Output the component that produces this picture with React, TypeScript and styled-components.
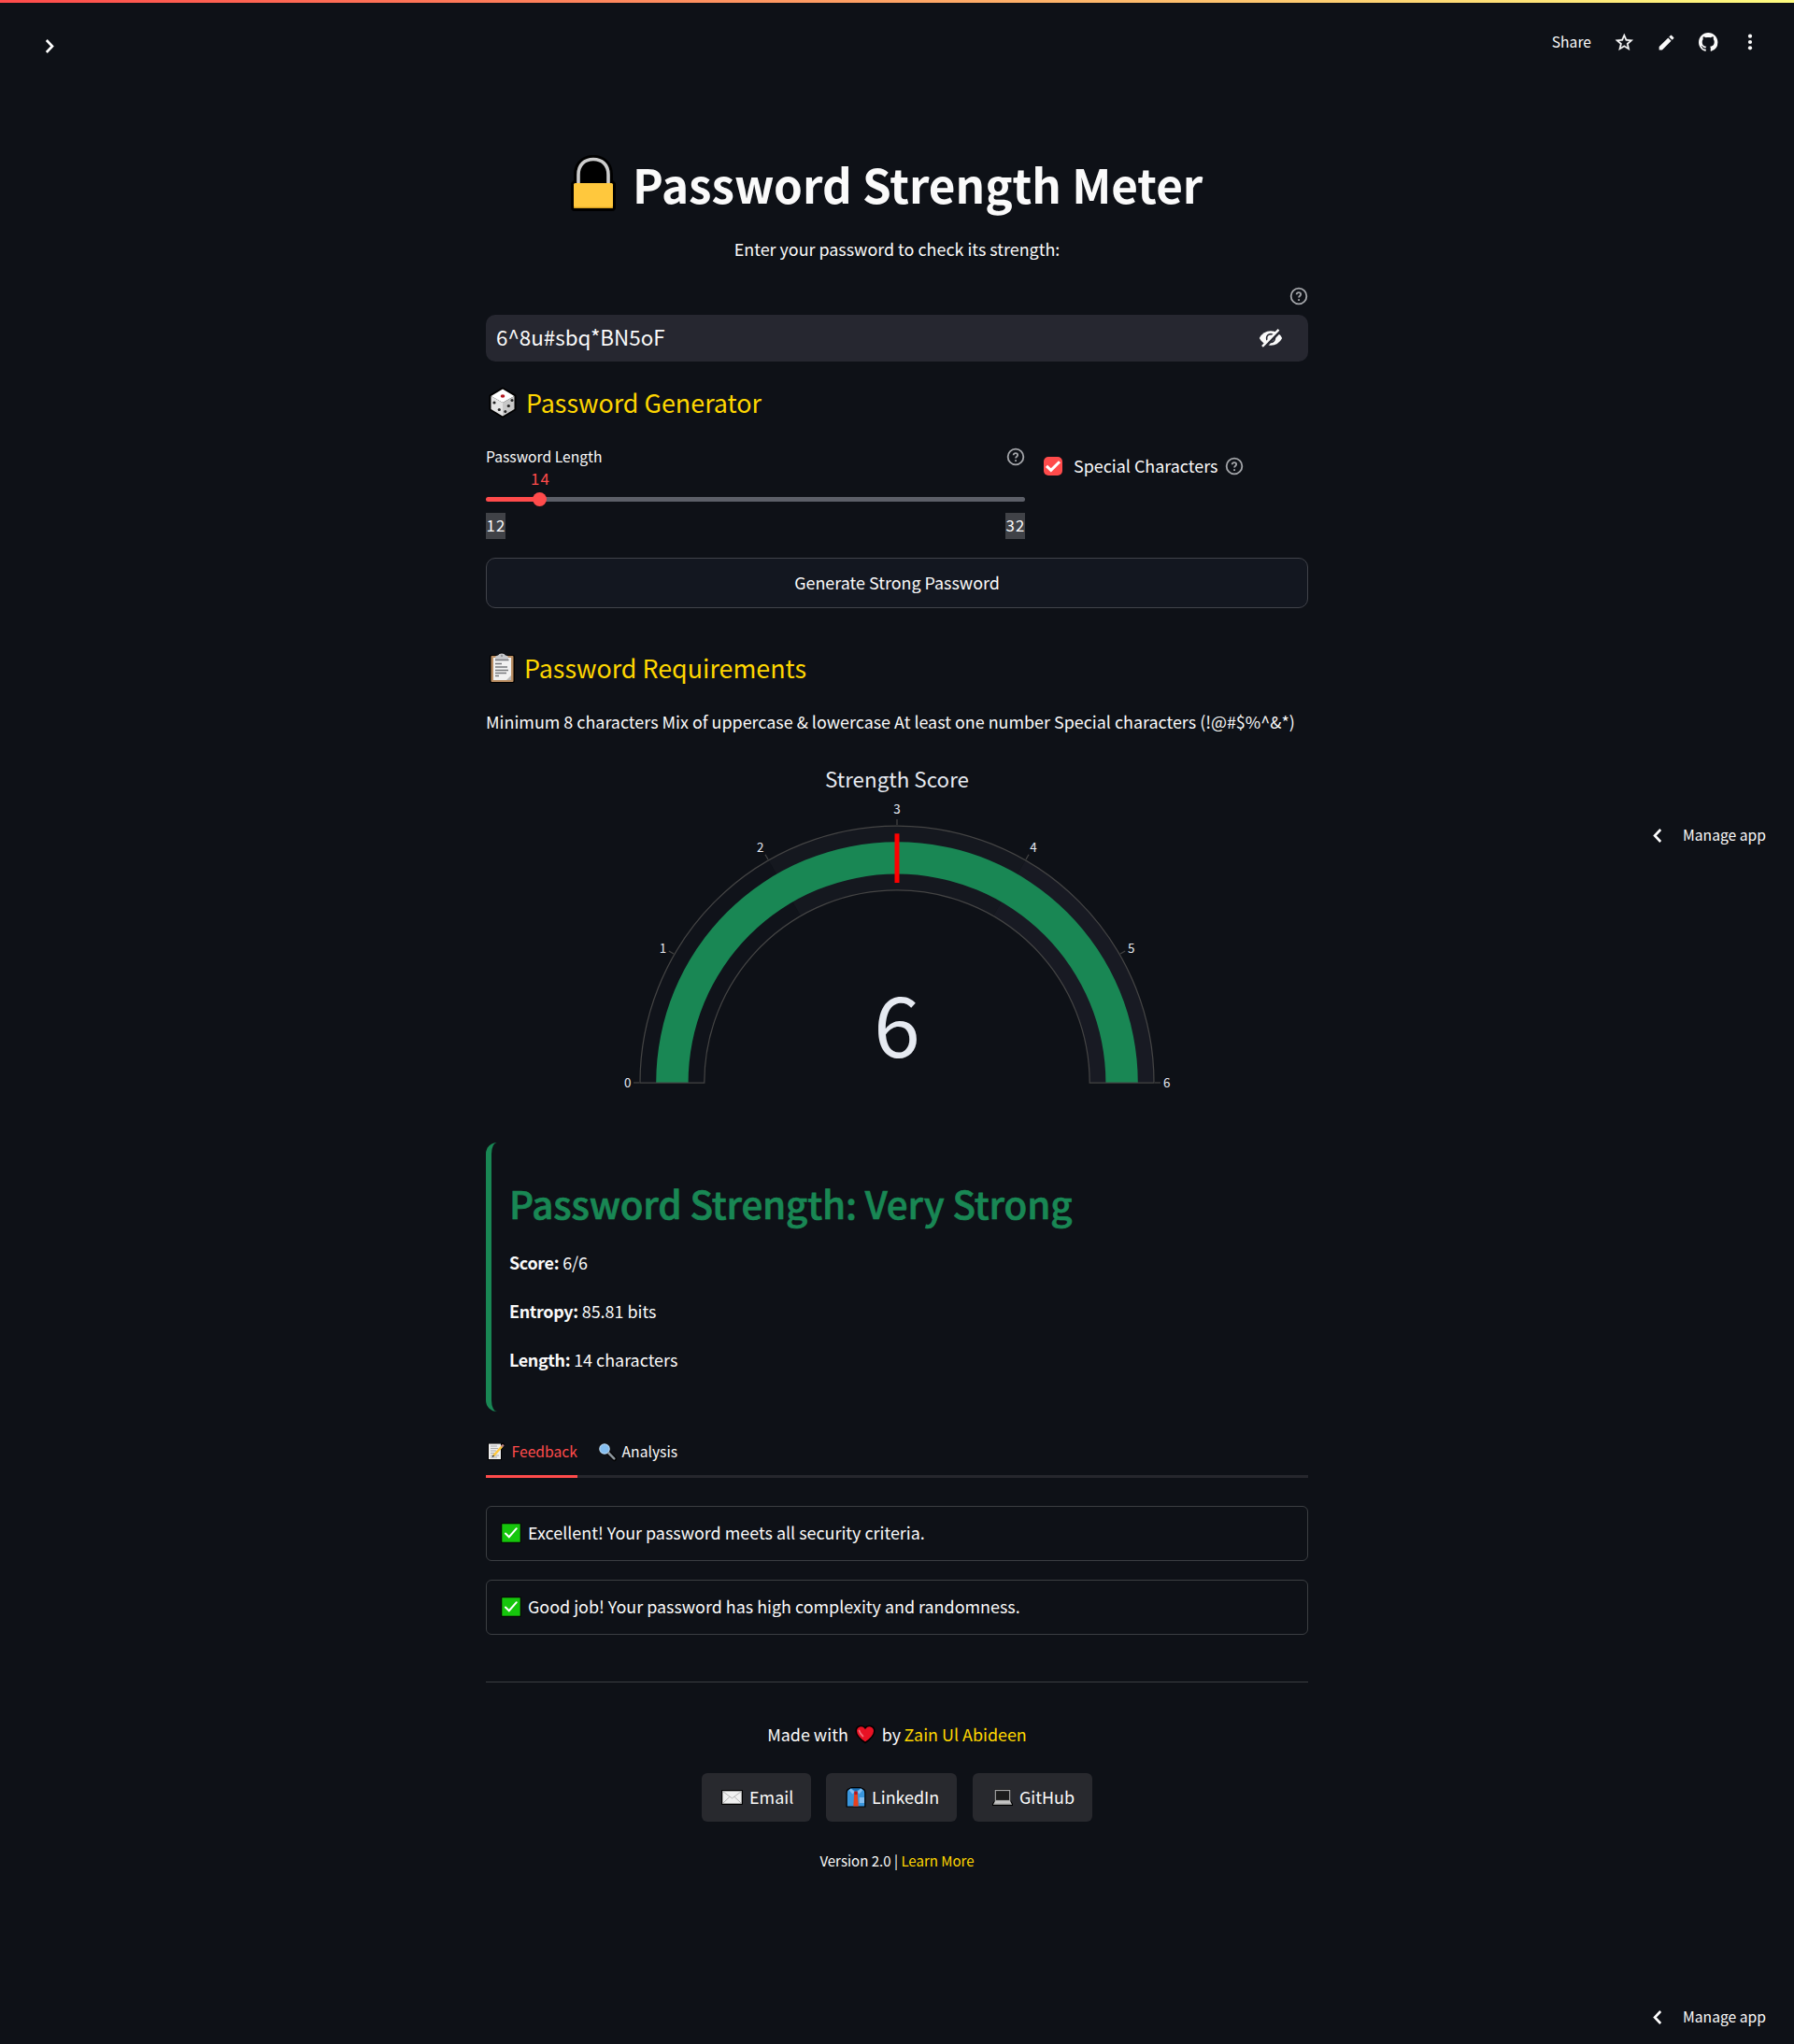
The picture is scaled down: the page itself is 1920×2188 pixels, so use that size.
import React from "react";
import styled, { createGlobalStyle, css } from "styled-components";

const FONT = `"Noto Sans CJK SC", "Noto Sans", sans-serif`;
const TEXT = "#fafafa";
const GOLD = "#ffd700";
const RED = "#ff4b4b";
const GREEN = "#198754";

const GlobalStyle = createGlobalStyle`
  *, *::before, *::after { box-sizing: border-box; }
  body { margin: 0; background: #0e1117; color: ${TEXT}; font-family: ${FONT}; }
  h1, h2, h3, p { margin: 0; font-weight: 400; }
  svg { display: block; flex: none; overflow: visible; }
  a { color: ${GOLD}; text-decoration: none; }
`;

const body = css`
  font-size: 17.91px;
  line-height: 32px;
`;
const small = css`
  font-size: 15.67px;
  line-height: 28px;
`;

const Page = styled.div`
  position: relative;
  height: 2188px;
  overflow: hidden;
  background: #0e1117;
`;
const Decoration = styled.div`
  height: 3px;
  background: linear-gradient(90deg, #ff4b4b, #fffd80);
`;
const Header = styled.header`
  height: 72px;
  display: flex;
  justify-content: space-between;
  padding: 28px 15px 0 42px;
`;
const Expand = styled.div`
  padding-top: 11px;
`;
const Toolbar = styled.div`
  display: flex;
  align-items: center;
  height: 28px;
  ${small}
`;
const Share = styled.span`
  margin-right: 23px;
`;
const ToolIcon = styled.span<{ $w: number }>`
  width: ${(p) => p.$w}px;
  display: flex;
  justify-content: center;
`;

const Main = styled.main`
  width: 880px;
  margin: 0 auto;
  padding-top: 87px;
  display: flex;
  flex-direction: column;
`;
const TitleRow = styled.div`
  display: flex;
  height: 67px;
  padding: 1px 0 0 90px;
  align-items: center;
  gap: 17px;
`;
const Title = styled.h1`
  font-size: 49.35px;
  line-height: 67px;
  font-weight: 700;
  white-space: nowrap;
`;
const Subtitle = styled.p`
  ${body}
  margin-top: 21px;
  text-align: center;
`;
const HelpRow = styled.div`
  display: flex;
  justify-content: flex-end;
  margin-top: 25px;
`;
const InputBox = styled.div`
  display: flex;
  align-items: center;
  justify-content: space-between;
  height: 50px;
  margin-top: 10px;
  padding: 0 27px 0 11px;
  border-radius: 10px;
  background: #262730;
`;
const InputText = styled.span`
  font-size: 22.4px;
  line-height: 32px;
  padding-bottom: 5px;
`;
const Section = styled.div<{ $top: number; $gap: number }>`
  display: flex;
  align-items: center;
  height: 37px;
  margin-top: ${(p) => p.$top}px;
  padding-left: 3px;
  gap: ${(p) => p.$gap}px;
`;
const SectionTitle = styled.h3`
  color: ${GOLD};
  font-size: 26.87px;
  line-height: 37px;
`;
const Columns = styled.div`
  display: grid;
  grid-template-columns: 577px 283px;
  gap: 20px;
  height: 102px;
  margin-top: 26px;
`;
const SliderLabel = styled.div`
  display: flex;
  justify-content: space-between;
  align-items: center;
  ${small}
`;
const digits = css`
  font-size: 16.8px;
  letter-spacing: 1.1px;
`;
const SliderValue = styled.div`
  width: 117px;
  text-align: center;
  color: ${RED};
  height: 17px;
  line-height: 19px;
  ${digits}
`;
const Track = styled.div`
  display: flex;
  align-items: center;
  height: 5px;
  margin: 12px 0;
  border-radius: 4px;
  background: linear-gradient(90deg, ${RED} 10%, #5c5f68 10%);
`;
const Thumb = styled.div`
  width: 15px;
  height: 15px;
  margin-left: 50px;
  border-radius: 50%;
  background: ${RED};
`;
const TickBar = styled.div`
  display: flex;
  justify-content: space-between;
`;
const TickLabel = styled.span`
  width: 21px;
  height: 28px;
  padding-left: 0.5px;
  line-height: 27px;
  background: #404247;
  ${digits}
`;
const CheckRow = styled.div`
  display: flex;
  align-items: center;
  height: 28px;
  margin-top: 10px;
  ${body}
`;
const CheckBox = styled.span`
  width: 20px;
  height: 20px;
  margin-right: 12px;
  border-radius: 5px;
  background: ${RED};
`;
const CheckText = styled.span`
  margin-right: 8px;
  padding-bottom: 2px;
`;
const GenerateButton = styled.button`
  height: 54px;
  margin-top: 20px;
  padding: 0 0 2px;
  border: 1px solid #41434a;
  border-radius: 10px;
  background: #131720;
  color: ${TEXT};
  font-family: ${FONT};
  ${body}
`;
const Paragraph = styled.p`
  ${body}
  margin-top: 23px;
  white-space: nowrap;
`;
const Gauge = styled.svg`
  margin-top: 12px;
  font-family: ${FONT};
`;
const Card = styled.section`
  height: 288px;
  margin-top: 23px;
  padding: 38px 19px 0;
  border-left: 6px solid ${GREEN};
  border-radius: 12px;
`;
const CardTitle = styled.h2`
  color: ${GREEN};
  font-size: 40.3px;
  line-height: 54px;
  font-weight: 500;
  letter-spacing: -0.13px;
  -webkit-text-stroke: 0.7px ${GREEN};
  margin-bottom: 20px;
`;
const Stat = styled.p`
  ${body}
  margin-bottom: 20px;
  b {
    font-weight: 700;
    letter-spacing: -0.33px;
  }
`;
const Tabs = styled.div`
  display: flex;
  gap: 20px;
  height: 53px;
  margin-top: 18px;
  box-shadow: inset 0 -3px 0 #26272d;
`;
const Tab = styled.div<{ $active?: boolean }>`
  display: flex;
  align-items: center;
  padding: 0 0 3px ${(p) => (p.$active ? 1 : 2)}px;
  gap: ${(p) => (p.$active ? 6.6 : 5.6)}px;
  width: ${(p) => (p.$active ? "98px" : "auto")};
  color: ${(p) => (p.$active ? RED : TEXT)};
  box-shadow: ${(p) => (p.$active ? `inset 0 -3px 0 ${RED}` : "none")};
  ${small}
`;
const Alert = styled.div<{ $top: number }>`
  display: flex;
  align-items: center;
  gap: 7px;
  height: 59px;
  margin-top: ${(p) => p.$top}px;
  padding: 0 15px 3px;
  border: 1px solid #3b3e42;
  border-radius: 6px;
  ${body}
  svg { margin-top: 2px; }
`;
const Rule = styled.div`
  height: 1px;
  margin-top: 50px;
  background: #3b3e42;
`;
const Made = styled.div`
  display: flex;
  justify-content: center;
  align-items: center;
  height: 32px;
  margin-top: 39px;
  ${body}
  svg { margin: 0 7px; }
  a { margin-left: 3.5px; }
`;
const Links = styled.div`
  display: flex;
  justify-content: center;
  margin-top: 26px;
`;
const LinkButton = styled.a<{ $w: number; $gap: number; $ml?: number }>`
  display: flex;
  align-items: center;
  width: ${(p) => p.$w}px;
  height: 52px;
  margin-left: ${(p) => p.$ml ?? 0}px;
  padding: 0 0 2px 21px;
  gap: ${(p) => p.$gap}px;
  border-radius: 6px;
  background: #28292e;
  color: ${TEXT};
  ${body}
  svg { margin-top: 1px; }
`;
const Version = styled.p`
  margin-top: 28px;
  text-align: center;
  font-size: 15.04px;
  line-height: 27px;
`;
const Manage = styled.div<{ $top: number }>`
  position: absolute;
  right: 30px;
  top: ${(p) => p.$top}px;
  display: flex;
  align-items: center;
  gap: 23.5px;
  ${small}
`;

const Help = () => (
  <svg width="20" height="20" viewBox="0 0 24 24" fill="none" stroke="#a3a5a9" strokeWidth="2.2" strokeLinejoin="round">
    <circle cx="12" cy="12" r="10" />
    <path d="M9.200 9.800a2.700 2.500 0 0 1 5.400 0c0 1.700-2.500 2.100-2.500 4M12.100 15.800v2.200" />
  </svg>
);
const Chevron = ({ left = false }: { left?: boolean }) => (
  <svg width={left ? 9 : 23} height="15" viewBox={left ? "0 0 9 15" : "-7 0 23 15"} fill="none" stroke="#fff" strokeWidth="2.6">
    <path d={left ? "M8.200 1L2 7.500l6.200 6.500" : "M.8 1L7 7.500.8 14"} />
  </svg>
);

const Lock = () => (
  <svg width="50" height="62" viewBox="0 0 50 62">
    <path d="M4 28V22C4 9 13 1 25 1s21 8 21 21v6l3 3v26q0 4-4 4H5q-4 0-4-4V31z" fill="#000" />
    <path d="M9 33V22C9 11 16 5.500 25 5.500S41 11 41 22v11" fill="none" stroke="#ccc" strokeWidth="3.600" />
    <rect x="4" y="31" width="42" height="27" rx="1.500" fill="#ffc83d" />
    <path d="M4 55v1.500q0 1.500 1.500 1.500h39q1.500 0 1.500-1.500V55q0 1.800-1.500 1.800h-39Q4 56.800 4 55z" fill="#d29a1c" />
  </svg>
);
const Dice = () => (
  <svg width="30" height="34" viewBox="0 0 30 34">
    <path d="M15 1L29 9v15.500L15 33 1 24.500V9z" fill="#000" stroke="#000" strokeLinejoin="round" />
    <path d="M15 2.500L27.500 10 15 17 2.500 10z" fill="#fff" />
    <path d="M2.500 10L15 17v14.500L2.500 24z" fill="#e4e4e4" />
    <path d="M27.500 10L15 17v14.500L27.500 24z" fill="#c8c8c8" />
    <ellipse cx="15" cy="10" rx="2.300" ry="1.700" fill="#b4161f" />
    <g fill="#222">
      <circle cx="6" cy="17" r="1.600" /><circle cx="11.300" cy="24.500" r="1.600" />
      <circle cx="25" cy="14.500" r="1.500" /><circle cx="21.300" cy="20.500" r="1.600" /><circle cx="17.800" cy="26.500" r="1.500" />
    </g>
  </svg>
);
const Clipboard = () => (
  <svg width="29" height="34" viewBox="0 0 29 34">
    <path d="M3 3h7q1-2.500 4-2.500T18 3h8q2 0 2 2v26q0 2-2 2H3q-2 0-2-2V5q0-2 2-2z" fill="#000" />
    <rect x="2.500" y="4" width="24" height="28" rx="1" fill="#b98d62" />
    <path d="M5 6h19v24H5z" fill="#f1f1f1" />
    <path d="M24 25v5h-5z" fill="#b9b9b9" />
    <path d="M7 8.500V6q0-2 3-2.500Q11 1.500 14 1.500t4 2q3 .5 3 2.500v2.500z" fill="#c7c9cd" />
    <path d="M7 8.500h14.500M7 12.500h7M7 16h13M7 19.500h14M7 22.500h12M7 25.500h4" stroke="#77797c" strokeWidth="1.300" />
    <circle cx="14" cy="4" r="1.200" fill="#94969a" />
  </svg>
);
const Memo = () => (
  <svg width="20" height="20" viewBox="0 0 20 20">
    <path d="M1 1h13l4-.500 1 2-3 5V19H1z" fill="#000" />
    <path d="M2 1.500h13V18H2z" fill="#eee" />
    <path d="M4 4h7M4 6.500h8M4 9h6M4 11.500h4M4 14h9M4 16h7" stroke="#aaa" />
    <path d="M7 14.500L16.500 4" stroke="#ffc83d" strokeWidth="2.600" />
    <path d="M15.800 4.700L17.800 2.500" stroke="#c38a8a" strokeWidth="2.400" />
    <path d="M6 15.500l1.500-1.700" stroke="#333" strokeWidth="1.200" />
  </svg>
);
const Magnifier = () => (
  <svg width="20" height="20" viewBox="0 0 20 20">
    <path d="M11 11l6.500 6.500" stroke="#000" strokeWidth="5" strokeLinecap="round" />
    <circle cx="7" cy="7" r="6.800" fill="#111" />
    <circle cx="7" cy="7" r="5.200" fill="#83bdf0" stroke="#b3d4f1" strokeWidth="1.200" />
    <path d="M11.500 11.500l5.800 5.800" stroke="#8d969d" strokeWidth="2.600" strokeLinecap="round" />
  </svg>
);
const Check = () => (
  <svg width="22" height="22" viewBox="0 0 22 22">
    <rect width="22" height="22" rx="1.500" fill="#050a05" />
    <rect x="1.300" y="1.300" width="19.400" height="19.400" fill="#16c60c" />
    <path d="M5 11.500l3.800 3.700 8-9" fill="none" stroke="#fff" strokeWidth="2" strokeLinecap="round" />
  </svg>
);
const Heart = () => (
  <svg width="22" height="21" viewBox="0 0 22 21">
    <path d="M11 19.500C4.500 15 1.200 11.500 1.200 7a5.400 5.400 0 0 1 9.800-3.200A5.400 5.400 0 0 1 20.800 7c0 4.500-3.300 8-9.800 12.500z" fill="#e81224" stroke="#000" strokeWidth="1.600" />
    <path d="M4.500 6.500q1 3.500 4 6" stroke="#f4717d" strokeWidth="1.800" fill="none" strokeLinecap="round" />
  </svg>
);
const Envelope = () => (
  <svg width="23" height="16" viewBox="0 0 23 16">
    <rect width="23" height="16" rx="1" fill="#000" />
    <rect x="1.300" y="1.300" width="20.400" height="13.400" fill="#f0f0f0" />
    <path d="M1.500 1.500l10 7.500 10-7.500M1.500 14.500l7.300-7M21.500 14.500l-7.300-7" fill="none" stroke="#b5b5b5" />
  </svg>
);
const Shirt = () => (
  <svg width="22" height="22" viewBox="0 0 22 22">
    <path d="M6 0h10l4 2q1.500 1 1.500 4v15.500H.5V6Q.5 3 2 2z" fill="#000" />
    <path d="M6 1.200l5 2.500 5-2.500 3 1.800q1.200.8 1.200 3.200v14.300H1.800V6.200Q1.800 3.800 3 3z" fill="#3a96dd" />
    <path d="M6 1.200h10L11 4.500z" fill="#1b6fb5" />
    <path d="M5.500 1.500L9.500 5 7.500 7.500 3.800 3.500zM16.500 1.500L12.500 5l2 2.500 3.700-4z" fill="#83bdf0" />
    <path d="M9.500 5h3l.4 3 .8 12.500H8.300L9.100 8z" fill="#e8401c" />
    <path d="M9.300 4.500h3.400L12.500 8h-3z" fill="#b4161f" />
    <path d="M14.700 11h5.300v6h-5.300z" fill="#83bdf0" />
  </svg>
);
const Laptop = () => (
  <svg width="22" height="18" viewBox="0 0 22 18">
    <path d="M2.500.5h17v11.500l2.500 4V18H0v-2l2.500-4z" fill="#000" />
    <rect x="3.300" y="1.500" width="15.400" height="11" fill="#1d1d1d" stroke="#a8a8a8" strokeWidth="1.200" />
    <path d="M2.800 13h16.400l1.600 3.700H1.200z" fill="#c4c4c4" />
    <path d="M1.200 15.700h19.600v1.200H1.200z" fill="#8c8c8c" />
  </svg>
);
const EyeOff = () => (
  <svg width="26" height="20" viewBox="0 0 26 20">
    <path d="M.8 10Q5 2.300 13 2.300T25.200 10Q21 17.700 13 17.700T.8 10z" fill="#fafafa" />
    <circle cx="13" cy="10" r="4.400" fill="none" stroke="#262730" strokeWidth="1.600" />
    <path d="M5.300 20.800L23.300 2.200" stroke="#262730" strokeWidth="3.200" />
    <path d="M4 18.800L21.500.8" stroke="#fafafa" strokeWidth="2.400" />
  </svg>
);
const Octocat = "M8 0C3.58 0 0 3.58 0 8c0 3.54 2.29 6.53 5.47 7.59.4.07.55-.17.55-.38 0-.19-.01-.82-.01-1.49-2.01.37-2.53-.49-2.69-.94-.09-.23-.48-.94-.82-1.13-.28-.15-.68-.52-.01-.53.63-.01 1.08.58 1.23.82.72 1.21 1.87.87 2.33.66.07-.52.28-.87.51-1.07-1.78-.2-3.64-.89-3.64-3.95 0-.87.31-1.59.82-2.15-.08-.2-.36-1.02.08-2.12 0 0 .67-.21 2.2.82.64-.18 1.32-.27 2-.27.68 0 1.36.09 2 .27 1.53-1.04 2.2-.82 2.2-.82.44 1.1.16 1.92.08 2.12.51.56.82 1.27.82 2.15 0 3.07-1.87 3.75-3.65 3.95.29.25.54.73.54 1.48 0 1.07-.01 1.93-.01 2.2 0 .21.15.46.55.38A8.013 8.013 0 0016 8c0-4.42-3.58-8-8-8z";

const CX = 440;
const CY = 359;
const point = (r: number, value: number) => {
  const a = Math.PI * (1 - value / 6);
  return `${(CX + r * Math.cos(a)).toFixed(2)} ${(CY - r * Math.sin(a)).toFixed(2)}`;
};
const band = (inner: number, outer: number, from: number, to: number) =>
  `M${point(outer, from)}A${outer} ${outer} 0 0 1 ${point(outer, to)}L${point(inner, to)}A${inner} ${inner} 0 0 0 ${point(inner, from)}Z`;
const TICKS = [
  [151.8, 364], [189.5, 219.5], [293.7, 112], [440, 71], [586, 112], [690.7, 219.5], [728.8, 364],
];

const StrengthGauge = () => (
  <Gauge width="880" height="400" viewBox="0 0 880 400">
    <path d={band(206, 275, 0, 2)} fill="#10131a" />
    <path d={band(206, 275, 2, 4)} fill="#15181f" />
    <path d={band(206, 275, 4, 6)} fill="#181a23" />
    <path d={band(223.4, 257.8, 0, 6)} fill={GREEN} />
    <path d={band(206.2, 275, 0, 6)} fill="none" stroke="#444" strokeWidth="1.25" />
    <path d="M440 92.300V145" stroke="#f00" strokeWidth="5" />
    {TICKS.map(([x, y], i) => (
      <g key={i}>
        <path d={`M${point(276, i)}L${point(282, i)}`} stroke="#444" strokeWidth="1.25" />
        <text x={x} y={y} fill="#e6eaf1" fontSize="13.43" textAnchor="middle">{i}</text>
      </g>
    ))}
    <text x="440" y="42.500" fill="#e6eaf1" fontSize="22.4" textAnchor="middle">Strength Score</text>
    <text x="440" y="332" fill="#e6eaf1" fontSize="89.500" textAnchor="middle">6</text>
  </Gauge>
);

export default function App() {
  return (
    <Page>
      <GlobalStyle />
      <Decoration />
      <Header>
        <Expand><Chevron /></Expand>
        <Toolbar>
          <Share>Share</Share>
          <ToolIcon $w={24}>
            <svg width="22.600" height="22.600" viewBox="0 0 24 24" fill="#fafafa" stroke="#fafafa" strokeWidth=".3"><path d="M22 9.240l-7.190-.620L12 2 9.190 8.630 2 9.240l5.460 4.730L5.820 21 12 17.270 18.180 21l-1.630-7.030L22 9.240zM12 15.400l-3.760 2.270 1-4.280-3.320-2.880 4.380-.380L12 6.100l1.710 4.040 4.380.380-3.320 2.880 1 4.280L12 15.400z" /></svg>
          </ToolIcon>
          <ToolIcon $w={66}>
            <svg width="21" height="21" viewBox="0 0 24 24" fill="#fafafa"><path d="M3 17.250V21h3.750L17.810 9.940l-3.750-3.750L3 17.250zM20.710 7.040a1 1 0 000-1.410l-2.340-2.340a1 1 0 00-1.410 0l-1.830 1.830 3.750 3.750 1.830-1.830z" /></svg>
          </ToolIcon>
          <ToolIcon $w={24}>
            <svg width="20.400" height="20.400" viewBox="0 0 16 16" fill="#fafafa"><path d={Octocat} /></svg>
          </ToolIcon>
          <ToolIcon $w={65}>
            <svg width="6" height="18" viewBox="0 0 6 18" fill="#fafafa"><circle cx="3" cy="2.700" r="2.100" /><circle cx="3" cy="9" r="2.100" /><circle cx="3" cy="15.300" r="2.100" /></svg>
          </ToolIcon>
        </Toolbar>
      </Header>
      <Main>
        <TitleRow>
          <Lock />
          <Title>Password Strength Meter</Title>
        </TitleRow>
        <Subtitle>Enter your password to check its strength:</Subtitle>
        <HelpRow><Help /></HelpRow>
        <InputBox>
          <InputText>6^8u#sbq*BN5oF</InputText>
          <EyeOff />
        </InputBox>
        <Section $top={25} $gap={10}>
          <Dice />
          <SectionTitle>Password Generator</SectionTitle>
        </Section>
        <Columns>
          <div>
            <SliderLabel><span>Password Length</span><Help /></SliderLabel>
            <SliderValue>14</SliderValue>
            <Track><Thumb /></Track>
            <TickBar><TickLabel>12</TickLabel><TickLabel>32</TickLabel></TickBar>
          </div>
          <CheckRow>
            <CheckBox>
              <svg width="20" height="20" viewBox="0 0 20 20" fill="none" stroke="#fff" strokeWidth="3"><path d="M3 9.800l4.800 4.500L17 5.200" /></svg>
            </CheckBox>
            <CheckText>Special Characters</CheckText>
            <Help />
          </CheckRow>
        </Columns>
        <GenerateButton>Generate Strong Password</GenerateButton>
        <Section $top={45} $gap={9}>
          <Clipboard />
          <SectionTitle>Password Requirements</SectionTitle>
        </Section>
        <Paragraph>Minimum 8 characters Mix of uppercase &amp; lowercase At least one number Special characters (!@#$%^&amp;*)</Paragraph>
        <StrengthGauge />
        <Card>
          <CardTitle>Password Strength: Very Strong</CardTitle>
          <Stat><b>Score:</b> 6/6</Stat>
          <Stat><b>Entropy:</b> 85.81 bits</Stat>
          <Stat><b>Length:</b> 14 characters</Stat>
        </Card>
        <Tabs>
          <Tab $active><Memo />Feedback</Tab>
          <Tab><Magnifier />Analysis</Tab>
        </Tabs>
        <Alert $top={30}><Check />Excellent! Your password meets all security criteria.</Alert>
        <Alert $top={20}><Check />Good job! Your password has high complexity and randomness.</Alert>
        <Rule />
        <Made>Made with<Heart />by <a href="#author">Zain Ul Abideen</a></Made>
        <Links>
          <LinkButton $w={117} $gap={7} href="#email"><Envelope />Email</LinkButton>
          <LinkButton $w={140} $gap={6} $ml={16} href="#linkedin"><Shirt />LinkedIn</LinkButton>
          <LinkButton $w={128} $gap={7} $ml={17} href="#github"><Laptop />GitHub</LinkButton>
        </Links>
        <Version>Version 2.0 | <a href="#more">Learn More</a></Version>
      </Main>
      <Manage $top={880}><Chevron left />Manage app</Manage>
      <Manage $top={2145}><Chevron left />Manage app</Manage>
    </Page>
  );
}
